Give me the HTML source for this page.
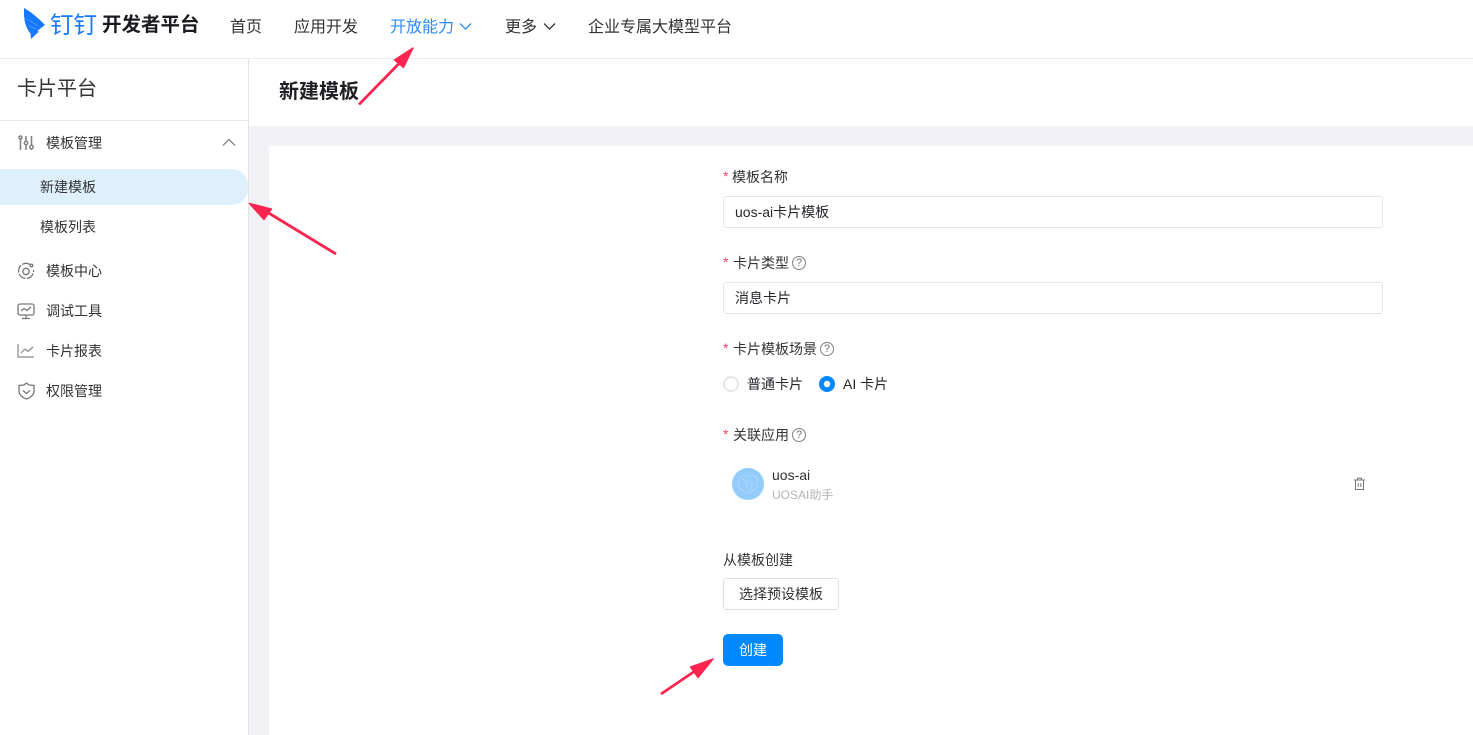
<!DOCTYPE html>
<html lang="zh"><head><meta charset="utf-8"><title>卡片平台</title>
<style>
html,body{margin:0;padding:0;width:1473px;height:735px;overflow:hidden;background:#fff}
body{position:relative;font-family:"Liberation Sans","Noto Sans CJK SC",sans-serif;color:#26262c;font-size:14px}
.a{position:absolute;white-space:nowrap;line-height:20px}
.nav{font-size:16px;line-height:24px;top:16px;color:#333}
.side{font-size:14px;color:#333}
.input{position:absolute;left:723px;width:658px;height:30px;border:1px solid #e5e5e8;border-radius:3px;line-height:30px;text-indent:11px;color:#26262c}
.star{color:#f5475c;position:absolute;left:723px;font-size:14px;line-height:20px}
.q{position:absolute;width:12px;height:12px;border:1px solid #808080;border-radius:50%;font-size:11px;line-height:12px;text-align:center;color:#707070}
svg{position:absolute;overflow:visible}
</style></head><body>

<div style="position:absolute;left:0;top:58px;width:1473px;height:1px;background:#ececee"></div>
<svg style="left:0;top:0" width="110" height="45" viewBox="0 0 110 45">
<path d="M24 8 C31 12 39 18.500 45 25 L37 31 L39 31.500 L31 39 L30.500 33.500 C26 28 23.500 21 24 8Z" fill="#1677ff"/>
<path d="M27 19 L38 26 M29 26 L36 29" stroke="#5fa3ff" stroke-width=".7" fill="none"/>
</svg>
<div class="a" style="left:50px;top:11px;font-size:23.500px;line-height:28px;color:#1677ff;font-weight:400">钉钉</div>
<div class="a" style="left:102px;top:11px;font-size:19.500px;line-height:28px;color:#1c1c20;font-weight:700">开发者平台</div>

<div class="a nav" style="left:230px">首页</div>
<div class="a nav" style="left:294px">应用开发</div>
<div class="a nav" style="left:390px;color:#2a8cf7">开放能力</div>
<svg style="left:459px;top:22px" width="13" height="9"><path d="M1 1.500 L6.500 7 L12 1.500" stroke="#2a8cf7" stroke-width="1.300" fill="none"/></svg>
<div class="a nav" style="left:505px">更多</div>
<svg style="left:543px;top:22px" width="13" height="9"><path d="M1 1.500 L6.500 7 L12 1.500" stroke="#333" stroke-width="1.300" fill="none"/></svg>
<div class="a nav" style="left:588px">企业专属大模型平台</div>

<!-- sidebar -->
<div style="position:absolute;left:248px;top:59px;width:1px;height:676px;background:#e3e3e6"></div>
<div class="a" style="left:17px;top:75px;font-size:20px;line-height:28px;color:#333">卡片平台</div>
<div style="position:absolute;left:0;top:120px;width:248px;height:1px;background:#e8e8ea"></div>

<svg style="left:18px;top:135px" width="17" height="16" fill="none" stroke="#808080" stroke-width="1.500">
<path d="M2.500 4V15M8 1V6M8 10V15M13.500 1V10M13.500 14V15"/>
<circle cx="2.500" cy="2.500" r="1.500"/><circle cx="8" cy="8" r="1.700"/><circle cx="13.500" cy="12" r="1.700"/>
</svg>
<div class="a side" style="left:46px;top:133px">模板管理</div>
<svg style="left:222px;top:138px" width="14" height="9"><path d="M1 7.500 L7 1.500 L13 7.500" stroke="#777" stroke-width="1.200" fill="none"/></svg>

<div style="position:absolute;left:0;top:169px;width:248px;height:36px;background:#dff0fd;border-radius:0 16px 16px 0"></div>
<div class="a side" style="left:40px;top:177px">新建模板</div>
<div class="a side" style="left:40px;top:217px">模板列表</div>

<svg style="left:17px;top:262px" width="18" height="18" fill="none" stroke="#777" stroke-width="1.300">
<path d="M13 2.500A7.500 7.500 0 1 0 16.500 8" stroke-dasharray="8 1.500"/><circle cx="9" cy="9.500" r="3.200"/><circle cx="14.500" cy="3.500" r="1.300"/>
</svg>
<div class="a side" style="left:46px;top:261px">模板中心</div>

<svg style="left:17px;top:303px" width="18" height="17" fill="none" stroke="#777" stroke-width="1.300">
<rect x="1" y="1" width="16" height="11" rx="2"/><path d="M4 8 L7 5.500 L10 7.500 L14 4M9 12V15M5 15.500H13"/>
</svg>
<div class="a side" style="left:46px;top:301px">调试工具</div>

<svg style="left:17px;top:343px" width="18" height="16" fill="none" stroke="#888" stroke-width="1.200">
<path d="M1 1V14H17M4 10 L8 6 L11 8.500 L16 4"/>
</svg>
<div class="a side" style="left:46px;top:341px">卡片报表</div>

<svg style="left:18px;top:382px" width="17" height="18" fill="none" stroke="#777" stroke-width="1.300">
<path d="M8.500 1 L11 3 L16 3.500 V9 C16 13 12 16 8.500 17 C5 16 1 13 1 9 V3.500 L6 3Z"/><path d="M5 8.500 L8.500 11.500 L12 8.500"/>
</svg>
<div class="a side" style="left:46px;top:381px">权限管理</div>

<!-- main -->
<div class="a" style="left:279px;top:78px;font-size:20px;line-height:28px;font-weight:700;color:#1f1f24">新建模板</div>
<div style="position:absolute;left:249px;top:126px;width:1224px;height:20px;background:#f1f1f6"></div>
<div style="position:absolute;left:249px;top:146px;width:20px;height:589px;background:#f1f1f6"></div>

<div class="star" style="top:166px">*</div>
<div class="a" style="left:732px;top:167px;color:#333">模板名称</div>
<div class="input" style="top:196px">uos-ai卡片模板</div>

<div class="star" style="top:252px">*</div>
<div class="a" style="left:733px;top:253px;color:#333">卡片类型</div>
<div class="q" style="left:792px;top:256px">?</div>
<div class="input" style="top:282px">消息卡片</div>

<div class="star" style="top:338px">*</div>
<div class="a" style="left:733px;top:339px;color:#333">卡片模板场景</div>
<div class="q" style="left:820px;top:342px">?</div>

<div style="position:absolute;left:723px;top:376px;width:12px;height:12px;border:2px solid #e5e5e8;border-radius:50%"></div>
<div class="a" style="left:747px;top:374px">普通卡片</div>
<svg style="left:819px;top:376px" width="16" height="16"><circle cx="8" cy="8" r="8" fill="#0089ff"/><circle cx="8" cy="8" r="3.200" fill="#fff"/></svg>
<div class="a" style="left:843px;top:374px">AI 卡片</div>

<div class="star" style="top:424px">*</div>
<div class="a" style="left:733px;top:425px;color:#333">关联应用</div>
<div class="q" style="left:792px;top:428px">?</div>

<div style="position:absolute;left:732px;top:468px;width:32px;height:32px;border-radius:50%;background:#93cbfb"></div>
<svg style="left:732px;top:468px" width="32" height="32" fill="none" stroke="#aed8fb" stroke-width=".8">
<path d="M10 8 H22 L25 11 V20 L18 25 H14 L7 20 V11Z"/><path d="M11 11 L21 16 L19 18 L20 22 L16 22 L15 18Z"/>
</svg>
<div class="a" style="left:772px;top:465px;color:#333">uos-ai</div>
<div class="a" style="left:772px;top:485px;font-size:12px;color:#b5b5b9">UOSAI助手</div>

<svg style="left:1353px;top:477px" width="13" height="14" fill="none" stroke="#777" stroke-width="1">
<path d="M1 3H12M4.500 3V1.200H8.500V3M2.500 3V12.500H10.500V3M5.200 6V10M7.800 6V10"/>
</svg>

<div class="a" style="left:723px;top:550px;color:#333">从模板创建</div>
<div style="position:absolute;left:723px;top:578px;width:114px;height:30px;border:1px solid #e0e0e4;border-radius:3px;line-height:30px;text-align:center;color:#333">选择预设模板</div>
<div style="position:absolute;left:723px;top:634px;width:60px;height:32px;background:#0089ff;border-radius:5px;line-height:32px;text-align:center;color:#fff">创建</div>

<!-- arrows -->
<svg style="left:0;top:0" width="1473" height="735">
<g fill="#fb2550" stroke="#fb2550" stroke-linejoin="round">
<path d="M359 104.500 L399 63.500" stroke-width="2.800"/><path d="M413 48 L394.500 60 L403.500 67.500Z" stroke-width="1.400"/>
<path d="M336 254 L267 212" stroke-width="2.800"/><path d="M249.500 203.500 L271.500 209 L264 219.500Z" stroke-width="1.400"/>
<path d="M661 694 L695 671" stroke-width="2.800"/><path d="M713 659 L690.500 667 L698 677.500Z" stroke-width="1.400"/>
</g></svg>
</body></html>
